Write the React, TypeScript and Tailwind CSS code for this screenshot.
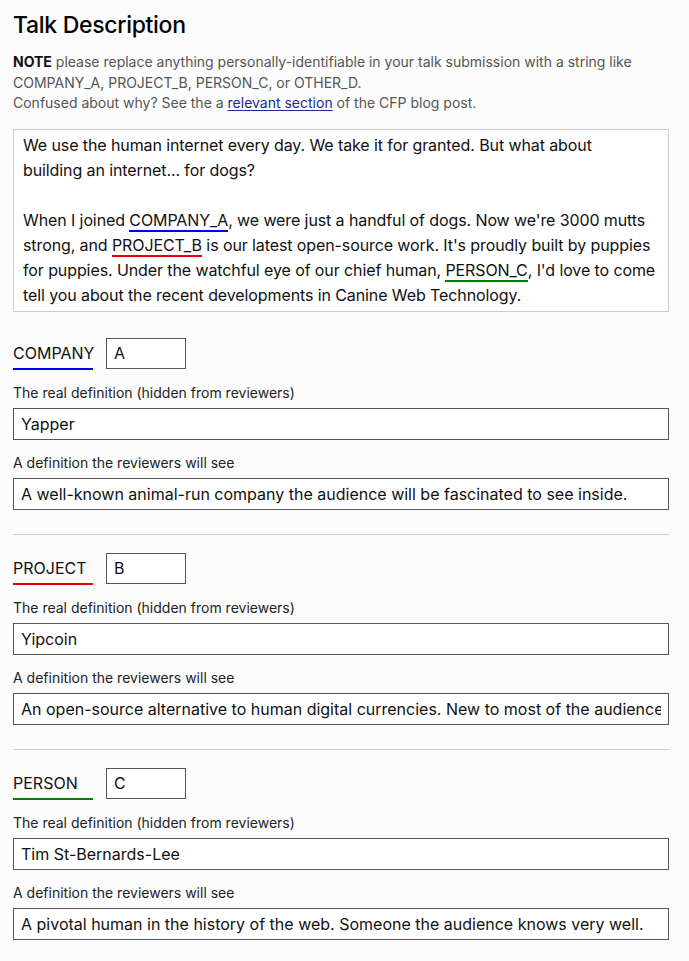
const sections = [
  {
    kind: "COMPANY",
    letter: "A",
    line: "border-[#0000ee]",
    real: "Yapper",
    shown:
      "A well-known animal-run company the audience will be fascinated to see inside.",
  },
  {
    kind: "PROJECT",
    letter: "B",
    line: "border-[#ee0000]",
    real: "Yipcoin",
    shown:
      "An open-source alternative to human digital currencies. New to most of the audience.",
  },
  {
    kind: "PERSON",
    letter: "C",
    line: "border-[#008000]",
    real: "Tim St-Bernards-Lee",
    shown:
      "A pivotal human in the history of the web. Someone the audience knows very well.",
  },
];

function Tag({ children, color }: { children: string; color: string }) {
  return <span className={`border-b-2 ${color}`}>{children}</span>;
}

function Field({ label, value }: { label: string; value: string }) {
  return (
    <div className="flex flex-col">
      <label className="text-[14px] leading-[20px] text-[#222]">{label}</label>
      <input
        readOnly
        value={value}
        className="mt-[5px] h-[32px] w-full border border-[#555] bg-white px-[7px] text-[16px] text-[#111] outline-none"
      />
    </div>
  );
}

export default function App() {
  return (
    <div
      className="min-h-screen bg-[#fcfcfc] pl-[13px] pr-[20px] pt-[10px] pb-[20px] text-[#111]"
      style={{ fontFamily: 'Inter, "Liberation Sans", sans-serif' }}
    >
      <h1 className="text-[23px] leading-[30px] font-medium tracking-[-0.3px] text-black">
        Talk Description
      </h1>

      <p className="mt-[12px] text-[14px] leading-[20.5px] text-[#555]">
        <b className="text-[#111]">NOTE</b> please replace anything personally-identifiable in
        your talk submission with a string like COMPANY_A, PROJECT_B, PERSON_C, or OTHER_D.
        <br />
        Confused about why? See the a{" "}
        <a href="#" className="text-[#1a2a9a] underline underline-offset-2">
          relevant section
        </a>{" "}
        of the CFP blog post.
      </p>

      <div className="mt-[15px] border border-[#ccc] bg-white pl-[9px] pr-[1px] pt-[3px] pb-[3px] text-[16px] leading-[25px] tracking-[-0.1px]">
        <p>
          We use the human internet every day. We take it for granted. But what about
          <br />
          building an internet... for dogs?
        </p>
        <p className="mt-[25px]">
          When I joined <Tag color="border-[#0000ee]">COMPANY_A</Tag>, we were just a handful
          of dogs. Now we're 3000 mutts strong, and{" "}
          <Tag color="border-[#ee0000]">PROJECT_B</Tag> is our latest open-source work. It's
          proudly built by puppies for puppies. Under the watchful eye of our chief human,{" "}
          <Tag color="border-[#008000]">PERSON_C</Tag>, I'd love to come tell you about the
          recent developments in Canine Web Technology.
        </p>
      </div>

      <div className="mt-[26px] flex flex-col">
        {sections.map((s, i) => (
          <div key={s.kind} className="flex flex-col">
            {i > 0 && <hr className="mb-[18px] mt-[24px] border-t border-[#ccc]" />}
            <div className="flex items-start gap-[13px]">
              <span
                className={`h-[32px] w-[80px] border-b-2 pt-[4px] text-[16px] leading-[22px] text-[#111] ${s.line}`}
              >
                {s.kind}
              </span>
              <input
                readOnly
                value={s.letter}
                className="h-[31px] w-[80px] border border-[#555] bg-white px-[7px] text-[16px] text-[#111] outline-none"
              />
            </div>
            <div className="mt-[13px] flex flex-col gap-[13px]">
              <Field label="The real definition (hidden from reviewers)" value={s.real} />
              <Field label="A definition the reviewers will see" value={s.shown} />
            </div>
          </div>
        ))}
      </div>
    </div>
  );
}
